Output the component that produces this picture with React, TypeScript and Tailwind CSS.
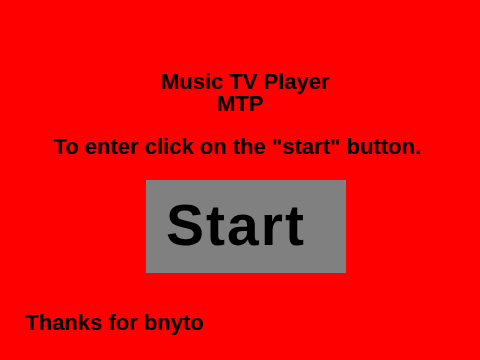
export default function App() {
  return (
    <div className="w-[480px] h-[360px] bg-[#ff0000] text-black font-bold font-['Liberation_Sans',Arial,sans-serif] overflow-hidden flex flex-col">
      <div className="pt-[71px] flex flex-col items-center">
        <div className="text-[22px] leading-[22px] pl-[10px]">Music TV Player</div>
        <div className="text-[22px] leading-[22px]">MTP</div>
      </div>
      <div className="mt-[21px] text-center text-[22px] leading-[22px] pr-[6px]">
        To enter click on the "start" button.
      </div>
      <div className="mt-[22px] flex justify-center pl-[12px]">
        <button className="w-[200px] h-[93px] bg-[#808080] text-[57px] leading-none tracking-[2px] text-left pl-[20px] pb-[3px]">
          Start
        </button>
      </div>
      <div className="mt-[39px] pl-[25px] text-[22px] leading-[22px]">Thanks for bnyto</div>
    </div>
  );
}
